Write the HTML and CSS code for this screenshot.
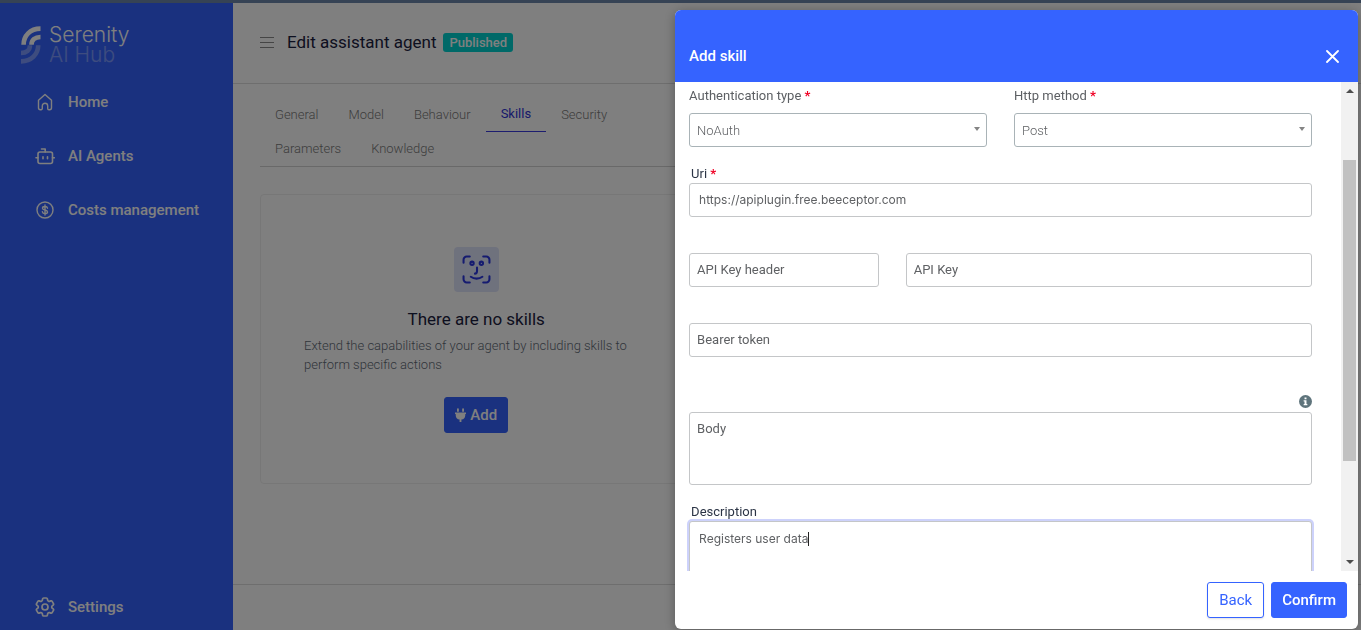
FILE: index.html
```html
<!DOCTYPE html>
<html lang="en">
<head>
<meta charset="utf-8">
<meta name="viewport" content="width=device-width, initial-scale=1">
<title>Serenity AI Hub</title>
<link rel="stylesheet" href="styles.css">
</head>
<body>
<div class="app">
  <nav class="sidebar">
    <a class="brand" href="#">
      <svg class="brand-mark" viewBox="0 0 20 38" fill="none" stroke="currentColor">
        <g stroke-width="4.6">
          <path d="M2.600 18.700C2.600 10 9 2.600 19.500 2.600"/>
          <path d="M10.500 18.700c0-4.700 3.500-7.700 9-7.700"/>
        </g>
        <g stroke-width="4.6" opacity=".35">
          <path d="M17.200 19.300c0 8.700-6.700 16.100-17.200 16.100"/>
          <path d="M9 19.300c0 4.700-3.500 7.700-9 7.700"/>
        </g>
      </svg>
      <span class="brand-name"><span>Serenity</span><span class="brand-sub">AI Hub</span></span>
    </a>
    <a class="nav-item" href="#">
      <svg class="nav-icon" viewBox="0 0 20 20" fill="none" stroke="currentColor" stroke-width="1.400" stroke-linejoin="round"><path d="M3.500 8.200 10 2.500l6.500 5.700v7.500a2 2 0 0 1-2 2h-.6a1.200 1.200 0 0 1-1.200-1.200V14a2.700 2.700 0 0 0-5.400 0v2.500a1.200 1.200 0 0 1-1.200 1.200h-.6a2 2 0 0 1-2-2z"/></svg>
      <span>Home</span>
    </a>
    <a class="nav-item" href="#">
      <svg class="nav-icon" viewBox="0 0 20 20" fill="none" stroke="currentColor" stroke-width="1.600" stroke-linecap="round" stroke-linejoin="round"><rect x="3" y="6" width="14.500" height="11.500" rx="2"/><path d="M10.200 6V3H6.500M1 11.700h2M17.500 11.700h1.800M8 10.800v2M12.500 10.800v2"/></svg>
      <span>AI Agents</span>
    </a>
    <a class="nav-item" href="#">
      <svg class="nav-icon" viewBox="0 0 20 20" fill="none" stroke="currentColor" stroke-width="1.400" stroke-linecap="round"><circle cx="10" cy="10" r="8"/><path d="M12.500 8.200c-.2-1.200-1.200-1.700-2.500-1.700s-2.500.6-2.500 1.700c0 2.500 5 1.200 5 3.700 0 1.100-1.100 1.700-2.500 1.700s-2.400-.6-2.600-1.800M10 5v10"/></svg>
      <span>Costs management</span>
    </a>
    <a class="nav-item nav-bottom" href="#">
      <svg class="nav-icon" viewBox="2 2 20 20" fill="none" stroke="currentColor" stroke-width="1.700" stroke-linejoin="round"><path d="M9.594 3.940c.09-.542.56-.94 1.110-.94h2.593c.55 0 1.020.398 1.110.94l.213 1.281c.063.374.313.686.645.87.074.04.147.083.22.127.325.196.72.257 1.075.124l1.217-.456a1.125 1.125 0 0 1 1.370.49l1.296 2.247a1.125 1.125 0 0 1-.26 1.431l-1.003.827c-.293.241-.438.613-.43.992a7.723 7.723 0 0 1 0 .255c-.008.378.137.75.43.991l1.004.827c.424.35.534.955.26 1.430l-1.298 2.247a1.125 1.125 0 0 1-1.369.491l-1.217-.456c-.355-.133-.75-.072-1.076.124a6.470 6.470 0 0 1-.22.128c-.331.183-.581.495-.644.869l-.213 1.281c-.09.543-.56.94-1.110.94h-2.594c-.55 0-1.019-.398-1.110-.94l-.213-1.281c-.062-.374-.312-.686-.644-.87a6.520 6.520 0 0 1-.22-.127c-.325-.196-.72-.257-1.076-.124l-1.217.456a1.125 1.125 0 0 1-1.369-.49l-1.297-2.247a1.125 1.125 0 0 1 .26-1.431l1.004-.827c.292-.24.437-.613.43-.991a6.932 6.932 0 0 1 0-.255c.007-.38-.138-.751-.43-.992l-1.004-.827a1.125 1.125 0 0 1-.26-1.430l1.297-2.247a1.125 1.125 0 0 1 1.370-.491l1.216.456c.356.133.751.072 1.076-.124.072-.044.146-.086.22-.128.332-.183.582-.495.644-.869l.214-1.280Z"/><circle cx="12" cy="12" r="3"/></svg>
      <span>Settings</span>
    </a>
  </nav>

  <main class="main">
    <header class="page-head">
      <button class="menu-btn" type="button" aria-label="Toggle menu">
        <svg viewBox="0 0 14 12" width="14" height="12" stroke="currentColor"><path d="M0 1.500h14M0 6.500h14M0 11.500h14"/></svg>
      </button>
      <h1 class="page-title">Edit assistant agent</h1>
      <span class="status">Published</span>
    </header>
    <div class="content">
      <section class="panel">
        <nav class="tabs">
          <a class="tab" href="#">General</a>
          <a class="tab" href="#">Model</a>
          <a class="tab" href="#">Behaviour</a>
          <a class="tab tab-active" href="#">Skills</a>
          <a class="tab" href="#">Security</a>
          <a class="tab" href="#">Parameters</a>
          <a class="tab" href="#">Knowledge</a>
        </nav>
        <div class="empty">
          <div class="empty-icon">
            <svg viewBox="0 0 28 28" width="29" height="29" fill="none" stroke="currentColor" stroke-width="2" stroke-linecap="round"><path d="M1.500 7.500V4.500a3 3 0 0 1 3-3h3M20.500 1.500h3a3 3 0 0 1 3 3v3M26.500 20.500v3a3 3 0 0 1-3 3h-3M7.500 26.500h-3a3 3 0 0 1-3-3v-3M14.500 12v3.500c0 1.500-.8 2.500-2 2.500M8.500 21c3.200 2.400 8 2.400 11.200 0"/><circle cx="9.700" cy="8" r="1.600"/><circle cx="18.700" cy="8" r="1.600"/></svg>
          </div>
          <h2 class="empty-title">There are no skills</h2>
          <p class="empty-text">Extend the capabilities of your agent by including skills to perform specific actions</p>
          <button class="btn btn-primary" type="button">
            <svg viewBox="0 0 12 15" width="11" height="14" fill="currentColor"><path d="M2.200 1a1 1 0 0 1 2 0v3h-2zM7.800 1a1 1 0 0 1 2 0v3h-2zM0 4.800h12v1.700h-.8v1.200A5 5 0 0 1 7 12.500V15H5v-2.500A5 5 0 0 1 .8 7.700V6.500H0z"/></svg>
            <span>Add</span>
          </button>
        </div>
      </section>
    </div>
    <footer class="page-foot"></footer>
  </main>

  <div class="backdrop">
    <div class="modal" role="dialog" aria-labelledby="modal-title">
      <header class="modal-head">
        <h2 class="modal-title" id="modal-title">Add skill</h2>
        <button class="close" type="button" aria-label="Close">
          <svg viewBox="0 0 13 13" width="13" height="13" stroke="currentColor" stroke-width="1.800" stroke-linecap="round"><path d="M1 1l11 11M12 1 1 12"/></svg>
        </button>
      </header>
      <div class="modal-body">
        <form class="form">
          <div class="row row-even">
            <div class="field">
              <label class="label label-soft" for="auth">Authentication type <span class="req">*</span></label>
              <div class="select"><select class="control" id="auth"><option>NoAuth</option></select></div>
            </div>
            <div class="field">
              <label class="label label-soft" for="method">Http method <span class="req">*</span></label>
              <div class="select"><select class="control" id="method"><option>Post</option></select></div>
            </div>
          </div>
          <div class="field field-uri">
            <label class="label" for="uri">Uri <span class="req">*</span></label>
            <input class="control filled" id="uri" type="text" value="https://apiplugin.free.beeceptor.com">
          </div>
          <div class="row row-key">
            <input class="control" type="text" placeholder="API Key header" aria-label="API Key header">
            <input class="control" type="text" placeholder="API Key" aria-label="API Key">
          </div>
          <input class="control" type="text" placeholder="Bearer token" aria-label="Bearer token">
          <div class="field field-body">
            <svg class="info" viewBox="0 0 12 12" width="13" height="13" role="img" aria-label="Information"><circle cx="6" cy="6" r="6" fill="#5f747c"/><path d="M5.100 2.200h1.800V4H5.100zM4.300 4.800h2.600v3.400h.8v1.300H4.300V8.200h.8V6.100h-.8z" fill="#fff"/></svg>
            <textarea class="control area" placeholder="Body" aria-label="Body"></textarea>
          </div>
          <div class="field field-desc">
            <label class="label" for="desc">Description</label>
            <div class="desc">
              <textarea class="control area filled focused" id="desc">Registers user data</textarea>
              <span class="caret"></span>
            </div>
          </div>
        </form>
        <div class="scrollbar" aria-hidden="true">
          <span class="arrow arrow-up"></span>
          <span class="track"><span class="thumb"></span></span>
          <span class="arrow arrow-down"></span>
        </div>
      </div>
      <footer class="modal-foot">
        <button class="btn btn-outline" type="button">Back</button>
        <button class="btn btn-primary" type="button">Confirm</button>
      </footer>
    </div>
  </div>
</div>
</body>
</html>
```
FILE: styles.css
```css
* { box-sizing: border-box; }

body {
  margin: 0;
  height: 100vh;
  overflow: hidden;
  border-top: 3px solid #364355;
  font-family: Roboto, "Open Sans", sans-serif;
  font-size: 13px;
  color: #2b3445;
  background: #fff;
}

h1, h2, p { margin: 0; font-weight: 400; }
a { color: inherit; text-decoration: none; }
button, input, select, textarea { font: inherit; color: inherit; }

.app {
  display: grid;
  grid-template-columns: 233px 1fr;
  height: 100%;
}

/* Sidebar */
.sidebar {
  display: flex;
  flex-direction: column;
  padding: 22px 0 8px;
  background: #3563ff;
  color: #fff;
}
.brand {
  display: flex;
  align-items: center;
  gap: 8px;
  height: 40px;
  margin: 0 0 10px 21px;
}
.brand-mark { width: 20px; height: 38px; }
.brand-name {
  display: flex;
  flex-direction: column;
  font-family: Inter, sans-serif;
  font-size: 21px;
  font-weight: 300;
  line-height: 20px;
}
.brand-sub { opacity: .35; }
.nav-item {
  display: flex;
  align-items: center;
  gap: 13px;
  height: 54px;
  padding-left: 35px;
  font-size: 15px;
  font-weight: 500;
}
.nav-icon { width: 20px; height: 20px; }
.nav-bottom { margin-top: auto; height: 30px; }

/* Page behind the dialog */
.main { display: flex; flex-direction: column; min-width: 0; }
.page-head {
  display: flex;
  align-items: center;
  height: 81px;
  padding: 0 27px 2px;
  border-bottom: 1px solid #dcdcdc;
}
.menu-btn {
  display: flex;
  margin-right: 13px;
  padding: 0;
  border: 0;
  background: none;
  color: #8a8a8a;
}
.page-title { font-size: 17px; color: #1b2140; }
.status {
  margin-left: 7px;
  padding: 0 6px;
  border-radius: 3px;
  background: #00d2d0;
  color: #fff;
  font-size: 13px;
  font-weight: 500;
  line-height: 19px;
}
.content {
  flex: 1;
  display: grid;
  grid-template-columns: 5fr 7fr;
  gap: 36px;
  padding: 14px 27px;
}
.tabs {
  display: flex;
  flex-wrap: wrap;
  margin-bottom: 27px;
  border-bottom: 1px solid #d2d2d2;
}
.tab {
  height: 34px;
  padding: 0 15px;
  font-weight: 300;
  line-height: 34px;
  color: #7a7a7a;
}
.tab-active {
  border-bottom: 1px solid #3a3adf;
  font-weight: 400;
  line-height: 32px;
  color: #2f33d6;
}
.empty {
  display: flex;
  flex-direction: column;
  align-items: center;
  padding: 52px 43px 50px;
  border: 1px solid #eee;
  border-radius: 4px;
}
.empty-icon {
  display: grid;
  place-items: center;
  width: 45px;
  height: 45px;
  border-radius: 4px;
  background: #dfe4fb;
  color: #2b37e0;
}
.empty-title { margin-top: 17px; font-size: 17px; line-height: 20px; color: #1b2140; }
.empty-text {
  width: 100%;
  margin: 7px 0 23px;
  font-weight: 300;
  line-height: 19px;
  color: #5f6a75;
}
.page-foot { height: 46px; border-top: 1px solid #dcdcdc; }

.btn {
  display: inline-flex;
  align-items: center;
  justify-content: center;
  gap: 4px;
  height: 36px;
  padding: 0 10px 1px;
  border: 1px solid #3563ff;
  border-radius: 3px;
  font-size: 15px;
}
.btn-primary { background: #3563ff; color: #fff; font-weight: 500; }
.btn-outline {
  padding: 0 11px 1px;
  background: #fff;
  color: #3563ff;
  box-shadow: 0 1px 2px rgba(0, 0, 0, .12);
}

/* Dialog */
.backdrop {
  position: fixed;
  inset: 3px 0 0;
  display: flex;
  justify-content: flex-end;
  padding: 7px 3px 1px;
  background: rgba(0, 0, 0, .5);
}
.modal {
  display: flex;
  flex-direction: column;
  width: 50.4%;
  overflow: hidden;
  border-radius: 6px;
  background: #fff;
  box-shadow: 0 2px 12px rgba(0, 0, 0, .3);
}
.modal-head {
  display: flex;
  align-items: center;
  justify-content: space-between;
  height: 72px;
  padding: 20px 19px 0 14px;
  background: #3563ff;
  color: #fff;
}
.modal-title { font-size: 15px; font-weight: 500; }
.close {
  display: flex;
  padding: 0;
  border: 0;
  background: none;
}
.modal-body {
  flex: 1;
  display: flex;
  min-height: 0;
  overflow: hidden;
}
.form { flex: 1; padding: 5px 29px 0 14px; }
.row { display: grid; gap: 27px; }
.row-even { grid-template-columns: 1fr 1fr; }
.row-key { grid-template-columns: 7fr 15fr; margin: 36px 0; }
.label { display: block; padding-left: 2px; line-height: 18px; }
.label-soft { margin-bottom: 8px; padding-left: 0; color: #5c5f63; }
.req { color: #f00024; font-weight: 700; }
.field-uri { margin-top: 18px; }
.field-body {
  display: flex;
  flex-direction: column;
  align-items: flex-end;
  gap: 4px;
  margin-top: 38px;
}
.field-desc { margin-top: 18px; }
.control {
  display: block;
  width: 100%;
  height: 34px;
  padding: 0 7px 2px;
  border: 1px solid #c4c6c8;
  border-radius: 3px;
  outline: 0;
  background: #fff;
  color: #5f6164;
}
.control::placeholder { color: #5f6164; opacity: 1; }
.filled { padding-left: 9px; font-family: Inter, sans-serif; font-size: 12px; }
.area { height: 73px; padding-top: 7px; line-height: 18px; resize: none; }
.focused { padding-top: 8px; box-shadow: 0 0 0 2px #cdd2fb; }
.desc { position: relative; }
.caret {
  position: absolute;
  top: 11px;
  left: 119px;
  width: 1px;
  height: 14px;
  background: #222;
}
.select { position: relative; }
.select .control {
  appearance: none;
  padding-bottom: 0;
  border-color: #a9b3b7;
  font-weight: 300;
}
.select::after {
  content: "";
  position: absolute;
  top: 14px;
  right: 7px;
  border: 3px solid transparent;
  border-top: 4px solid #848484;
  border-bottom: 0;
}

.scrollbar {
  display: flex;
  flex-direction: column;
  width: 17px;
  background: #f1f1f1;
}
.arrow { display: grid; place-items: center; height: 18px; }
.arrow::after { content: ""; border: 4px solid transparent; }
.arrow-up::after { border-top: 0; border-bottom-color: #4d4d4d; }
.arrow-down::after { border-bottom: 0; border-top-color: #4d4d4d; }
.track { flex: 1; display: flex; flex-direction: column; padding: 60px 2px 92px; }
.thumb { flex: 1; background: #c1c1c1; }

.modal-foot {
  display: flex;
  align-items: center;
  justify-content: flex-end;
  gap: 7px;
  height: 58px;
  padding: 0 11px;
}
```
